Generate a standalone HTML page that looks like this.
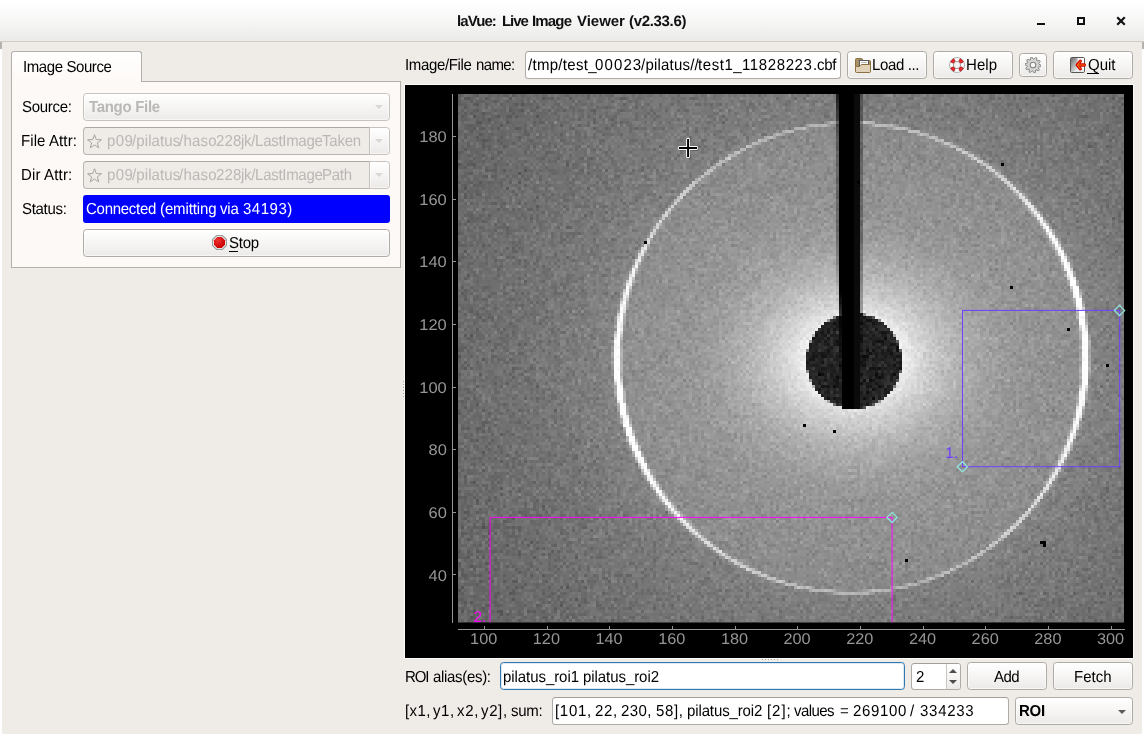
<!DOCTYPE html>
<html lang="en"><head><meta charset="utf-8"><title>laVue: Live Image Viewer (v2.33.6)</title>
<style>
*{box-sizing:border-box}
html,body{margin:0;padding:0}
body{width:1144px;height:736px;position:relative;overflow:hidden;background:#fff;font-family:"Liberation Sans",sans-serif;font-size:15px;color:#000;text-rendering:geometricPrecision}
.abs,.t,.ic,.plot{position:absolute}
.ic,.plot{display:block}
.t{white-space:pre;line-height:20px;height:20px;will-change:transform;transform:scaleY(1.06);transform-origin:0 14px}
.t.ns{transform:none}
.plot{will-change:transform}
#titlebar{left:0;top:0;width:1144px;height:42px;background:linear-gradient(#ffffff 0%,#fbfbfb 30%,#f3f3f2 65%,#ebebea 100%);border-bottom:1px solid #cfcbc7}
#win{left:2px;top:42px;width:1140px;height:692px;background:#efebe7}
.edge{width:2px;top:42px;height:7px;background:#b5b1ae}
.btn{border:1px solid #aeaaa6;border-radius:3.5px;background:linear-gradient(#ffffff,#f7f6f5 45%,#eceae8);box-shadow:inset 0 0 0 1px rgba(255,255,255,.55)}
.entry{border:1px solid #aeaaa6;border-top-color:#a29e9a;border-radius:3.5px;background:#fff}
.btn.dis{border-color:#c6c2be}
.entry.dis{border-color:#b9b5b1;border-top-color:#aaa6a2}
.entry.focus{border-color:#2f78b2;box-shadow:inset 0 0 0 1px rgba(61,125,184,.18)}
.entry.dis{background:#efebe7}
.pane{border:1px solid #b3afab;background:#fdf9f6}
.tab{border:1px solid #b3afab;border-bottom:none;border-radius:3px 3px 0 0;background:linear-gradient(#ffffff,#fdf9f6)}
.dot{width:1px;height:1px;background:#aaa6a2}
</style></head>
<body>
<div id="titlebar" class="abs"></div>
<svg class="ic" style="left:1030px;top:10px" width="104" height="24" viewBox="0 0 104 24"><rect x="7" y="13" width="8" height="2" fill="#111"/><rect x="48" y="8" width="6" height="6" fill="none" stroke="#111" stroke-width="2"/><path d="M88 8 L94 14 M94 8 L88 14" stroke="#111" stroke-width="2.2" stroke-linecap="square"/></svg>
<div id="win" class="abs"></div>
<div class="abs edge" style="left:0"></div><div class="abs edge" style="left:1142px"></div>
<div class="abs pane" style="left:11px;top:81px;width:390px;height:187px;"></div>
<div class="abs tab" style="left:11px;top:51px;width:131px;height:31px;"></div>
<div class="abs btn dis" style="left:83px;top:93px;width:307px;height:28px;"></div>
<svg class="ic" style="left:375.0px;top:105.0px" width="8" height="4" viewBox="0 0 8 4"><polygon points="0,0 8,0 4.0,4" fill="#dad8d6"/></svg>
<div class="abs entry dis" style="left:83px;top:127px;width:287px;height:28px;border-radius:3.5px 0 0 4px"></div>
<div class="abs btn dis" style="left:369px;top:127px;width:21px;height:28px;border-radius:0 3.5px 3.5px 0"></div>
<svg class="ic" style="left:375.0px;top:139.0px" width="8" height="4" viewBox="0 0 8 4"><polygon points="0,0 8,0 4.0,4" fill="#dad8d6"/></svg>
<svg class="ic" style="left:87px;top:134px" width="15" height="16" viewBox="0 0 15 16">
<polygon points="7.50,0.70 9.26,5.57 14.44,5.74 10.35,8.93 11.79,13.91 7.50,11.00 3.21,13.91 4.65,8.93 0.56,5.74 5.74,5.57" fill="none" stroke="#a8a5a2" stroke-width="1"/>
</svg>
<div class="abs entry dis" style="left:83px;top:161px;width:287px;height:28px;border-radius:3.5px 0 0 4px"></div>
<div class="abs btn dis" style="left:369px;top:161px;width:21px;height:28px;border-radius:0 3.5px 3.5px 0"></div>
<svg class="ic" style="left:375.0px;top:173.0px" width="8" height="4" viewBox="0 0 8 4"><polygon points="0,0 8,0 4.0,4" fill="#dad8d6"/></svg>
<svg class="ic" style="left:87px;top:168px" width="15" height="16" viewBox="0 0 15 16">
<polygon points="7.50,0.70 9.26,5.57 14.44,5.74 10.35,8.93 11.79,13.91 7.50,11.00 3.21,13.91 4.65,8.93 0.56,5.74 5.74,5.57" fill="none" stroke="#a8a5a2" stroke-width="1"/>
</svg>
<div class="abs " style="left:83px;top:195px;width:307px;height:28px;background:#0000ff;border-radius:3px"></div>
<div class="abs btn" style="left:83px;top:229px;width:307px;height:28px;"></div>
<svg class="ic" style="left:212px;top:235px" width="15" height="15" viewBox="0 0 15 15">
<defs><radialGradient id="sg" cx="0.35" cy="0.3" r="0.7"><stop offset="0" stop-color="#f03030"/><stop offset="1" stop-color="#cc0000"/></radialGradient></defs>
<polygon points="14.43,10.37 10.37,14.43 4.63,14.43 0.57,10.37 0.57,4.63 4.63,0.57 10.37,0.57 14.43,4.63" fill="#fff" stroke="#979e9c" stroke-width="1.2"/>
<polygon points="13.04,9.80 9.80,13.04 5.20,13.04 1.96,9.80 1.96,5.20 5.20,1.96 9.80,1.96 13.04,5.20" fill="url(#sg)"/>
</svg>
<div class="abs entry" style="left:525px;top:51px;width:316px;height:28px;"></div>
<div class="abs btn" style="left:847px;top:51px;width:80px;height:28px;"></div>
<svg class="ic" style="left:855px;top:58px" width="16" height="16" viewBox="0 0 16 16">
<path d="M0.5 1.5 Q0.5 0.5 1.5 0.5 H6.5 Q7.5 0.5 7.8 2.5 H14.5 Q15.5 2.5 15.5 3.5 V13.5 H0.5 Z" fill="#a88f66" stroke="#8a7040"/>
<rect x="4.5" y="2.5" width="9" height="6" fill="#fff" stroke="#555b5c"/>
<line x1="6" y1="4.5" x2="12" y2="4.5" stroke="#babdb6"/>
<path d="M0.5 9.5 Q0.5 8.5 1.5 8.5 H4 Q5 8.5 5.5 7.5 Q6 6.5 7 6.5 H14.5 Q15.5 6.5 15.5 7.5 V13.5 Q15.5 14.5 14.5 14.5 H1.5 Q0.5 14.5 0.5 13.5 Z" fill="#e2d3b8" stroke="#8a7040"/>
</svg>
<div class="abs btn" style="left:933px;top:51px;width:80px;height:28px;"></div>
<svg class="ic" style="left:949px;top:57px" width="16" height="16" viewBox="0 0 16 16">
<circle cx="8" cy="8" r="7.5" fill="#fff" stroke="#a9b1af"/>
<circle cx="8" cy="8" r="3.6" fill="#f6f5f3" stroke="#9aa3a1"/>
<path d="M14.29 11.07 A7.0 7.0 0 0 1 11.07 14.29 L9.80 11.69 A4.1 4.1 0 0 0 11.69 9.80 Z" fill="#ec2a2e" stroke="#a8080c" stroke-width="0.7"/><path d="M4.93 14.29 A7.0 7.0 0 0 1 1.71 11.07 L4.31 9.80 A4.1 4.1 0 0 0 6.20 11.69 Z" fill="#ec2a2e" stroke="#a8080c" stroke-width="0.7"/><path d="M1.71 4.93 A7.0 7.0 0 0 1 4.93 1.71 L6.20 4.31 A4.1 4.1 0 0 0 4.31 6.20 Z" fill="#ec2a2e" stroke="#a8080c" stroke-width="0.7"/><path d="M11.07 1.71 A7.0 7.0 0 0 1 14.29 4.93 L11.69 6.20 A4.1 4.1 0 0 0 9.80 4.31 Z" fill="#ec2a2e" stroke="#a8080c" stroke-width="0.7"/>
</svg>
<div class="abs btn" style="left:1019px;top:53px;width:28px;height:24px;"></div>
<svg class="ic" style="left:1025px;top:57px" width="16" height="16" viewBox="0 0 16 16">
<polygon points="13.61,7.01 16.00,8.21 15.87,9.46 13.28,10.14 13.12,10.50 14.35,12.87 13.51,13.80 11.02,12.83 10.68,13.03 10.27,15.67 9.04,15.93 7.60,13.69 7.21,13.64 5.33,15.54 4.18,15.03 4.34,12.37 4.04,12.10 1.41,12.53 0.78,11.44 2.47,9.38 2.39,8.99 0.00,7.79 0.13,6.54 2.72,5.86 2.88,5.50 1.65,3.13 2.49,2.20 4.98,3.17 5.32,2.97 5.73,0.33 6.96,0.07 8.40,2.31 8.79,2.36 10.67,0.46 11.82,0.97 11.66,3.63 11.96,3.90 14.59,3.47 15.22,4.56 13.53,6.62" fill="#d6d6d4" stroke="#868886" stroke-width="1" stroke-linejoin="round"/>
<circle cx="8" cy="8" r="2.8" fill="#f6f5f3" stroke="#868886" stroke-width="1.1"/>
</svg>
<div class="abs btn" style="left:1053px;top:51px;width:80px;height:28px;"></div>
<svg class="ic" style="left:1070px;top:57px" width="17" height="16" viewBox="0 0 17 16">
<defs><linearGradient id="dg" x1="0" y1="0" x2="0.7" y2="1"><stop offset="0" stop-color="#6c6c6c"/><stop offset="0.6" stop-color="#b8b8b8"/><stop offset="1" stop-color="#e4e4e4"/></linearGradient></defs>
<rect x="0.5" y="0.5" width="14" height="15" rx="1.2" fill="#fff" stroke="#555753"/>
<path d="M1 1 H7.6 V12 L3.2 15 H1 Z" fill="url(#dg)"/>
<path d="M7.6 12 L3.2 15 H14 V12.5 Z" fill="#e9ebe8"/>
<path d="M10.3 4.3 L7.2 8 L10.3 11.7 M7.4 8 H14.4" fill="none" stroke="#d40000" stroke-width="3.3" stroke-linecap="round" stroke-linejoin="round"/>
<path d="M10.3 4.5 L7.4 8 L10.3 11.5 M7.6 8 H14.6" fill="none" stroke="#f57900" stroke-width="1.1" stroke-linecap="round" stroke-linejoin="round"/>
</svg>
<div class="abs " style="left:404px;top:84px;width:730px;height:575px;border:1px solid #fdfbf9"></div>
<svg class="plot" width="728" height="573" viewBox="0 0 728 573" style="left:405px;top:85px">
<defs>
<radialGradient id="glow" gradientUnits="userSpaceOnUse" cx="446.4" cy="272.8" r="480">
<stop offset="0" stop-color="#888"/>
<stop offset="0.482" stop-color="#888"/>
<stop offset="0.497" stop-color="#7f7f7f"/>
<stop offset="0.546" stop-color="#7c7c7c"/>
<stop offset="0.625" stop-color="#777"/>
<stop offset="0.729" stop-color="#707070"/>
<stop offset="0.875" stop-color="#686868"/>
<stop offset="1" stop-color="#646464"/>
</radialGradient>
<radialGradient id="halo" gradientUnits="userSpaceOnUse" cx="448.4" cy="274.0" r="300" gradientTransform="translate(448.4 274.0) scale(1 0.84) translate(-448.4 -274.0)">
<stop offset="0" stop-color="#fff" stop-opacity="0.9"/>
<stop offset="0.16" stop-color="#fff" stop-opacity="0.87"/>
<stop offset="0.183" stop-color="#fff" stop-opacity="0.81"/>
<stop offset="0.223" stop-color="#fff" stop-opacity="0.66"/>
<stop offset="0.29" stop-color="#fff" stop-opacity="0.5"/>
<stop offset="0.357" stop-color="#fff" stop-opacity="0.345"/>
<stop offset="0.457" stop-color="#fff" stop-opacity="0.2"/>
<stop offset="0.557" stop-color="#fff" stop-opacity="0.12"/>
<stop offset="0.69" stop-color="#fff" stop-opacity="0.075"/>
<stop offset="0.8" stop-color="#fff" stop-opacity="0.045"/>
<stop offset="1" stop-color="#fff" stop-opacity="0"/>
</radialGradient>
<linearGradient id="ringc" gradientUnits="userSpaceOnUse" x1="0" y1="37.900000000000006" x2="0" y2="507.70000000000005" gradientTransform="rotate(-8 446.4 272.8)">
<stop offset="0" stop-color="#fff" stop-opacity="0.4"/>
<stop offset="0.15" stop-color="#fff" stop-opacity="0.56"/>
<stop offset="0.3" stop-color="#fff" stop-opacity="0.9"/>
<stop offset="0.4" stop-color="#fff" stop-opacity="1"/>
<stop offset="0.62" stop-color="#fff" stop-opacity="1"/>
<stop offset="0.76" stop-color="#fff" stop-opacity="0.85"/>
<stop offset="0.9" stop-color="#fff" stop-opacity="0.55"/>
<stop offset="1" stop-color="#fff" stop-opacity="0.38"/>
</linearGradient>
<linearGradient id="ringw" gradientUnits="userSpaceOnUse" x1="0" y1="37.900000000000006" x2="0" y2="507.70000000000005" gradientTransform="rotate(-8 446.4 272.8)">
<stop offset="0" stop-color="#fff" stop-opacity="0"/>
<stop offset="0.18" stop-color="#fff" stop-opacity="0.1"/>
<stop offset="0.33" stop-color="#fff" stop-opacity="0.65"/>
<stop offset="0.43" stop-color="#fff" stop-opacity="1"/>
<stop offset="0.62" stop-color="#fff" stop-opacity="1"/>
<stop offset="0.72" stop-color="#fff" stop-opacity="0.6"/>
<stop offset="0.86" stop-color="#fff" stop-opacity="0.12"/>
<stop offset="1" stop-color="#fff" stop-opacity="0"/>
</linearGradient>
<clipPath id="imgclip"><rect x="53" y="9" width="666" height="528.5"/></clipPath>
<filter id="noi" filterUnits="userSpaceOnUse" primitiveUnits="userSpaceOnUse" x="53" y="9" width="666" height="531" color-interpolation-filters="sRGB">
<feTurbulence type="fractalNoise" baseFrequency="0.83" numOctaves="2" seed="7" result="tn"/>
<feColorMatrix in="tn" type="matrix" values="1 0 0 0 0  1 0 0 0 0  1 0 0 0 0  0 0 0 0 1" result="n"/>
<feComposite in="SourceGraphic" in2="n" operator="arithmetic" k1="-0.2" k2="1.1" k3="0.36" k4="-0.18"/>
</filter>
<filter id="pix" filterUnits="userSpaceOnUse" primitiveUnits="userSpaceOnUse" x="53" y="9" width="666" height="531" color-interpolation-filters="sRGB">
<feFlood x="54" y="10" width="1" height="1" flood-color="#000" result="dot"/>
<feComposite in="dot" in2="dot" operator="over" x="53" y="9" width="3" height="3" result="cell"/>
<feTile in="cell" x="53" y="9" width="666" height="531" result="grid"/>
<feComposite in="SourceGraphic" in2="grid" operator="in" result="samp"/>
<feMorphology in="samp" operator="dilate" radius="1"/>
</filter>
</defs>
<rect width="728" height="573" fill="#000"/>
<g clip-path="url(#imgclip)"><g filter="url(#pix)"><g filter="url(#noi)">
<rect x="53" y="9" width="666" height="531" fill="url(#glow)"/>
<rect x="53" y="9" width="666" height="531" fill="url(#halo)"/>
<ellipse cx="446.4" cy="272.8" rx="234.2" ry="234.9" fill="none" stroke="url(#ringw)" stroke-opacity="0.3" stroke-width="10"/>
<ellipse cx="446.4" cy="272.8" rx="234.2" ry="234.9" fill="none" stroke="url(#ringw)" stroke-width="6"/>
<ellipse cx="446.4" cy="272.8" rx="234.2" ry="234.9" fill="none" stroke="url(#ringc)" stroke-width="3.3"/>
<circle cx="449.1" cy="276" r="47.8" fill="#232323"/></g>
<polygon points="429.79999999999995,5 458.20000000000005,5 458.6,290 434,290" fill="#000" fill-opacity="0.3"/>
<polygon points="432.29999999999995,5 455,5 455.6,324.2 436.6,324.2" fill="#000"/>
<polygon points="448.5,5 455,5 455.6,324.2 450,324.2" fill="#0b0b0b"/>
<rect x="239.5" y="156.5" width="2" height="2" fill="#000"/>
<rect x="596.5" y="78.5" width="2" height="2" fill="#000"/>
<rect x="605.5" y="201.5" width="2" height="2" fill="#000"/>
<rect x="662.5" y="243.5" width="2" height="2" fill="#000"/>
<rect x="701.5" y="279.5" width="2" height="2" fill="#000"/>
<rect x="398.5" y="339.5" width="2" height="2" fill="#000"/>
<rect x="428.5" y="345.5" width="2" height="2" fill="#000"/>
<rect x="500.5" y="474.5" width="2" height="2" fill="#000"/>
<rect x="635.5" y="456.5" width="5" height="2" fill="#000"/>
<rect x="638.5" y="459.5" width="2" height="2" fill="#000"/>
<rect x="452.5" y="96.5" width="2" height="2" fill="#000"/>
</g></g>
<g stroke="#969696" stroke-width="1" shape-rendering="crispEdges">
<line x1="47.5" y1="9" x2="47.5" y2="538"/>
<line x1="53" y1="544.5" x2="720" y2="544.5"/>
<line x1="48" y1="489.5" x2="51" y2="489.5"/>
<line x1="48" y1="427.5" x2="51" y2="427.5"/>
<line x1="48" y1="364.5" x2="51" y2="364.5"/>
<line x1="48" y1="302.5" x2="51" y2="302.5"/>
<line x1="48" y1="239.5" x2="51" y2="239.5"/>
<line x1="48" y1="176.5" x2="51" y2="176.5"/>
<line x1="48" y1="114.5" x2="51" y2="114.5"/>
<line x1="48" y1="51.5" x2="51" y2="51.5"/>
<line x1="79.5" y1="541" x2="79.5" y2="544"/>
<line x1="142.5" y1="541" x2="142.5" y2="544"/>
<line x1="204.5" y1="541" x2="204.5" y2="544"/>
<line x1="267.5" y1="541" x2="267.5" y2="544"/>
<line x1="330.5" y1="541" x2="330.5" y2="544"/>
<line x1="392.5" y1="541" x2="392.5" y2="544"/>
<line x1="455.5" y1="541" x2="455.5" y2="544"/>
<line x1="518.5" y1="541" x2="518.5" y2="544"/>
<line x1="580.5" y1="541" x2="580.5" y2="544"/>
<line x1="643.5" y1="541" x2="643.5" y2="544"/>
<line x1="706.5" y1="541" x2="706.5" y2="544"/>
</g>
<g fill="#969696" font-family='"Liberation Sans", sans-serif' font-size="15.5">
<text x="41.80000000000001" y="495.5" text-anchor="end" textLength="18.3" lengthAdjust="spacingAndGlyphs">40</text>
<text x="41.80000000000001" y="432.8" text-anchor="end" textLength="18.3" lengthAdjust="spacingAndGlyphs">60</text>
<text x="41.80000000000001" y="370.2" text-anchor="end" textLength="18.3" lengthAdjust="spacingAndGlyphs">80</text>
<text x="41.80000000000001" y="307.6" text-anchor="end" textLength="27.5" lengthAdjust="spacingAndGlyphs">100</text>
<text x="41.80000000000001" y="244.9" text-anchor="end" textLength="27.5" lengthAdjust="spacingAndGlyphs">120</text>
<text x="41.80000000000001" y="182.3" text-anchor="end" textLength="27.5" lengthAdjust="spacingAndGlyphs">140</text>
<text x="41.80000000000001" y="119.6" text-anchor="end" textLength="27.5" lengthAdjust="spacingAndGlyphs">160</text>
<text x="41.80000000000001" y="57.0" text-anchor="end" textLength="27.5" lengthAdjust="spacingAndGlyphs">180</text>
<text x="78.7" y="559.4" text-anchor="middle" textLength="27.2" lengthAdjust="spacingAndGlyphs">100</text>
<text x="141.4" y="559.4" text-anchor="middle" textLength="27.2" lengthAdjust="spacingAndGlyphs">120</text>
<text x="204.1" y="559.4" text-anchor="middle" textLength="27.2" lengthAdjust="spacingAndGlyphs">140</text>
<text x="266.8" y="559.4" text-anchor="middle" textLength="27.2" lengthAdjust="spacingAndGlyphs">160</text>
<text x="329.5" y="559.4" text-anchor="middle" textLength="27.2" lengthAdjust="spacingAndGlyphs">180</text>
<text x="392.1" y="559.4" text-anchor="middle" textLength="27.2" lengthAdjust="spacingAndGlyphs">200</text>
<text x="454.8" y="559.4" text-anchor="middle" textLength="27.2" lengthAdjust="spacingAndGlyphs">220</text>
<text x="517.5" y="559.4" text-anchor="middle" textLength="27.2" lengthAdjust="spacingAndGlyphs">240</text>
<text x="580.2" y="559.4" text-anchor="middle" textLength="27.2" lengthAdjust="spacingAndGlyphs">260</text>
<text x="642.9" y="559.4" text-anchor="middle" textLength="27.2" lengthAdjust="spacingAndGlyphs">280</text>
<text x="705.6" y="559.4" text-anchor="middle" textLength="27.2" lengthAdjust="spacingAndGlyphs">300</text>
</g>
<g fill="none" stroke-width="1">
<rect x="557.5" y="225.39999999999998" width="157.2" height="156.3" stroke="#7040ff"/>
<path d="M85.10000000000002 537.4 V432.4 H487.1 V537.4" stroke="#ff00ff" stroke-opacity="0.95"/>
</g>
<path d="M714.5 220.4 L719.6 225.5 L714.5 230.6 L709.4 225.5 Z" fill="none" stroke="#8fe4de" stroke-width="1.3"/>
<path d="M557.4 376.7 L562.5 381.8 L557.4 386.9 L552.3 381.8 Z" fill="none" stroke="#8fe4de" stroke-width="1.3"/>
<path d="M487.1 427.3 L492.2 432.4 L487.1 437.5 L482.0 432.4 Z" fill="none" stroke="#8fe4de" stroke-width="1.3"/>
<g font-family='"Liberation Sans", sans-serif' font-size="15.5">
<text x="540.2" y="373" fill="#7040ff">1.</text>
<text x="68.5" y="537" fill="#ff00ff">2.</text>
</g>
<path d="M275.5 63.8 H292.1 M283.90000000000003 55.6 V72.1" stroke="#000" stroke-opacity="0.25" stroke-width="4" stroke-linecap="round" fill="none"/>
<path d="M274.70000000000005 63 H291.3 M283.1 54.8 V71.3" stroke="#fff" stroke-width="4" stroke-linecap="round" fill="none"/>
<path d="M273.90000000000003 63 H292.1 M283.1 54.0 V72.1" stroke="#000" stroke-width="2" fill="none"/>
</svg>
<div class="abs dot" style="left:762px;top:659px"></div>
<div class="abs dot" style="left:403px;top:381px"></div>
<div class="abs dot" style="left:765px;top:659px"></div>
<div class="abs dot" style="left:403px;top:384px"></div>
<div class="abs dot" style="left:768px;top:659px"></div>
<div class="abs dot" style="left:403px;top:387px"></div>
<div class="abs dot" style="left:771px;top:659px"></div>
<div class="abs dot" style="left:403px;top:390px"></div>
<div class="abs dot" style="left:774px;top:659px"></div>
<div class="abs dot" style="left:403px;top:393px"></div>
<div class="abs dot" style="left:777px;top:659px"></div>
<div class="abs dot" style="left:403px;top:396px"></div>
<div class="abs entry focus" style="left:500px;top:662px;width:405px;height:28px;"></div>
<div class="abs entry" style="left:911px;top:663px;width:50px;height:27px;"></div>
<div class="abs btn" style="left:946px;top:664px;width:14px;height:25px;border:none;border-left:1px solid #c9c5c1;border-radius:0 2px 2px 0;box-shadow:none"></div>
<svg class="ic" style="left:949.0px;top:669.0px" width="8" height="4" viewBox="0 0 8 4"><polygon points="0,4 4.0,0 8,4" fill="#4d4d4d"/></svg>
<svg class="ic" style="left:949.0px;top:680.0px" width="8" height="4" viewBox="0 0 8 4"><polygon points="0,0 8,0 4.0,4" fill="#4d4d4d"/></svg>
<div class="abs btn" style="left:967px;top:662px;width:80px;height:28px;"></div>
<div class="abs btn" style="left:1053px;top:662px;width:80px;height:28px;"></div>
<div class="abs entry" style="left:552px;top:697px;width:457px;height:28px;"></div>
<div class="abs btn" style="left:1015px;top:697px;width:118px;height:28px;"></div>
<svg class="ic" style="left:1117.5px;top:709.5px" width="8" height="4" viewBox="0 0 8 4"><polygon points="0,0 8,0 4.0,4" fill="#5a5a5a"/></svg>
<span class="t ns" style="left:456.80px;top:12.00px;font-size:15px;font-weight:700;color:#111;letter-spacing:-0.934px">laVue:</span>
<span class="t ns" style="left:501.60px;top:12.00px;font-size:15px;font-weight:700;color:#111;letter-spacing:-1.072px">Live</span>
<span class="t ns" style="left:532.30px;top:12.00px;font-size:15px;font-weight:700;color:#111;letter-spacing:-0.840px">Image</span>
<span class="t ns" style="left:576.60px;top:12.00px;font-size:15px;font-weight:700;color:#111;letter-spacing:-0.039px">Viewer</span>
<span class="t ns" style="left:628.90px;top:12.00px;font-size:15px;font-weight:700;color:#111;letter-spacing:-0.318px">(v2.33.6)</span>
<span class="t " style="left:22.80px;top:58.00px;font-size:15px;font-weight:400;color:#000;letter-spacing:-0.408px">Image Source</span>
<span class="t " style="left:21.70px;top:98.00px;font-size:15px;font-weight:400;color:#000;letter-spacing:-0.301px">Source:</span>
<span class="t " style="left:89.20px;top:98.00px;font-size:15px;font-weight:700;color:#bab8b6;letter-spacing:-0.310px">Tango File</span>
<span class="t " style="left:21.20px;top:132.00px;font-size:15px;font-weight:400;color:#000;letter-spacing:0.098px">File Attr:</span>
<span class="t " style="left:106.90px;top:132.00px;font-size:15px;font-weight:400;color:#bab8b6;letter-spacing:0.434px">p09</span>
<span class="t " style="left:131.70px;top:132.00px;font-size:15px;font-weight:400;color:#bab8b6;letter-spacing:0.110px">/pilatus</span>
<span class="t " style="left:178.90px;top:132.00px;font-size:15px;font-weight:400;color:#bab8b6;letter-spacing:0.224px">/haso</span>
<span class="t " style="left:216.40px;top:132.00px;font-size:15px;font-weight:400;color:#bab8b6;letter-spacing:0.184px">228</span>
<span class="t " style="left:241.00px;top:132.00px;font-size:15px;font-weight:400;color:#bab8b6;letter-spacing:-0.295px">jk/LastImage</span>
<span class="t " style="left:322.10px;top:132.00px;font-size:15px;font-weight:400;color:#bab8b6;letter-spacing:-0.233px">Taken</span>
<span class="t " style="left:21.20px;top:166.00px;font-size:15px;font-weight:400;color:#000;letter-spacing:0.148px">Dir Attr:</span>
<span class="t " style="left:106.90px;top:166.00px;font-size:15px;font-weight:400;color:#bab8b6;letter-spacing:0.434px">p09</span>
<span class="t " style="left:131.70px;top:166.00px;font-size:15px;font-weight:400;color:#bab8b6;letter-spacing:0.110px">/pilatus</span>
<span class="t " style="left:178.90px;top:166.00px;font-size:15px;font-weight:400;color:#bab8b6;letter-spacing:0.224px">/haso</span>
<span class="t " style="left:216.40px;top:166.00px;font-size:15px;font-weight:400;color:#bab8b6;letter-spacing:0.184px">228</span>
<span class="t " style="left:241.00px;top:166.00px;font-size:15px;font-weight:400;color:#bab8b6;letter-spacing:-0.295px">jk/LastImage</span>
<span class="t " style="left:322.40px;top:166.00px;font-size:15px;font-weight:400;color:#bab8b6;letter-spacing:-0.286px">Path</span>
<span class="t " style="left:21.50px;top:200.00px;font-size:15px;font-weight:400;color:#000;letter-spacing:-0.301px">Status:</span>
<span class="t " style="left:85.90px;top:200.00px;font-size:15px;font-weight:400;color:#fff;letter-spacing:-0.270px">Connected</span>
<span class="t " style="left:159.90px;top:200.00px;font-size:15px;font-weight:400;color:#fff;letter-spacing:-0.116px">(emitting</span>
<span class="t " style="left:220.10px;top:200.00px;font-size:15px;font-weight:400;color:#fff;letter-spacing:-0.144px">via</span>
<span class="t " style="left:242.60px;top:200.00px;font-size:15px;font-weight:400;color:#fff;letter-spacing:0.516px">34193)</span>
<div class="abs" style="left:229px;top:251px;width:9px;height:1.4px;background:#000"></div>
<span class="t " style="left:229.10px;top:234.00px;font-size:15px;font-weight:400;color:#000;letter-spacing:-0.220px">Stop</span>
<span class="t " style="left:405.00px;top:56.00px;font-size:15px;font-weight:400;color:#000;letter-spacing:-0.348px">Image/File</span>
<span class="t " style="left:475.90px;top:56.00px;font-size:15px;font-weight:400;color:#000;letter-spacing:-0.626px">name:</span>
<span class="t " style="left:527.70px;top:56.00px;font-size:15px;font-weight:400;color:#000;letter-spacing:0.293px">/tmp/test_</span>
<span class="t " style="left:595.40px;top:56.00px;font-size:15px;font-weight:400;color:#000;letter-spacing:1.120px">00023</span>
<span class="t " style="left:640.80px;top:56.00px;font-size:15px;font-weight:400;color:#000;letter-spacing:0.214px">/pilatus//</span>
<span class="t " style="left:697.90px;top:56.00px;font-size:15px;font-weight:400;color:#000;letter-spacing:0.565px">test1_</span>
<span class="t " style="left:742.30px;top:56.00px;font-size:15px;font-weight:400;color:#000;letter-spacing:0.611px">11828223</span>
<span class="t " style="left:812.60px;top:56.00px;font-size:15px;font-weight:400;color:#000;letter-spacing:-0.229px">.cbf</span>
<span class="t " style="left:871.80px;top:56.00px;font-size:15px;font-weight:400;color:#000;letter-spacing:-0.378px">Load ...</span>
<span class="t " style="left:965.80px;top:56.00px;font-size:15px;font-weight:400;color:#000;letter-spacing:0.080px">Help</span>
<div class="abs" style="left:1087px;top:73px;width:12px;height:1.4px;background:#000"></div>
<span class="t " style="left:1088.10px;top:56.00px;font-size:15px;font-weight:400;color:#000;letter-spacing:-0.039px">Quit</span>
<span class="t " style="left:404.80px;top:668.00px;font-size:15px;font-weight:400;color:#000;letter-spacing:-1.186px">ROI</span>
<span class="t " style="left:432.60px;top:668.00px;font-size:15px;font-weight:400;color:#000;letter-spacing:-0.318px">alias(es):</span>
<span class="t " style="left:502.50px;top:668.00px;font-size:15px;font-weight:400;color:#000;letter-spacing:-0.065px">pilatus_roi1</span>
<span class="t " style="left:582.70px;top:668.00px;font-size:15px;font-weight:400;color:#000;letter-spacing:-0.065px">pilatus_roi2</span>
<span class="t " style="left:916.00px;top:668.00px;font-size:15px;font-weight:400;color:#000;letter-spacing:-0.144px">2</span>
<span class="t " style="left:994.30px;top:668.00px;font-size:15px;font-weight:400;color:#000;letter-spacing:-0.602px">Add</span>
<span class="t " style="left:1074.10px;top:668.00px;font-size:15px;font-weight:400;color:#000;letter-spacing:-0.004px">Fetch</span>
<span class="t " style="left:405.00px;top:702.00px;font-size:15px;font-weight:400;color:#000;letter-spacing:0.404px">[x1,</span>
<span class="t " style="left:432.90px;top:702.00px;font-size:15px;font-weight:400;color:#000;letter-spacing:0.542px">y1,</span>
<span class="t " style="left:456.80px;top:702.00px;font-size:15px;font-weight:400;color:#000;letter-spacing:0.742px">x2,</span>
<span class="t " style="left:481.00px;top:702.00px;font-size:15px;font-weight:400;color:#000;letter-spacing:0.638px">y2],</span>
<span class="t " style="left:510.50px;top:702.00px;font-size:15px;font-weight:400;color:#000;letter-spacing:-0.305px">sum:</span>
<span class="t " style="left:554.90px;top:702.00px;font-size:15px;font-weight:400;color:#000;letter-spacing:0.706px">[101,</span>
<span class="t " style="left:594.90px;top:702.00px;font-size:15px;font-weight:400;color:#000;letter-spacing:0.720px">22,</span>
<span class="t " style="left:620.90px;top:702.00px;font-size:15px;font-weight:400;color:#000;letter-spacing:0.432px">230,</span>
<span class="t " style="left:655.70px;top:702.00px;font-size:15px;font-weight:400;color:#000;letter-spacing:0.623px">58],</span>
<span class="t " style="left:686.80px;top:702.00px;font-size:15px;font-weight:400;color:#000;letter-spacing:-0.120px">pilatus_roi2</span>
<span class="t " style="left:766.80px;top:702.00px;font-size:15px;font-weight:400;color:#000;letter-spacing:0.947px">[2];</span>
<span class="t " style="left:793.70px;top:702.00px;font-size:15px;font-weight:400;color:#000;letter-spacing:-0.552px">values</span>
<span class="t " style="left:840.00px;top:702.00px;font-size:15px;font-weight:400;color:#000;letter-spacing:0.634px">=</span>
<span class="t " style="left:853.00px;top:702.00px;font-size:15px;font-weight:400;color:#000;letter-spacing:0.647px">269100</span>
<span class="t " style="left:909.90px;top:702.00px;font-size:15px;font-weight:400;color:#000;letter-spacing:2.728px">/</span>
<span class="t " style="left:920.00px;top:702.00px;font-size:15px;font-weight:400;color:#000;letter-spacing:0.727px">334233</span>
<span class="t " style="left:1019.30px;top:702.00px;font-size:15px;font-weight:700;color:#000;letter-spacing:-0.236px">ROI</span>
</body></html>
